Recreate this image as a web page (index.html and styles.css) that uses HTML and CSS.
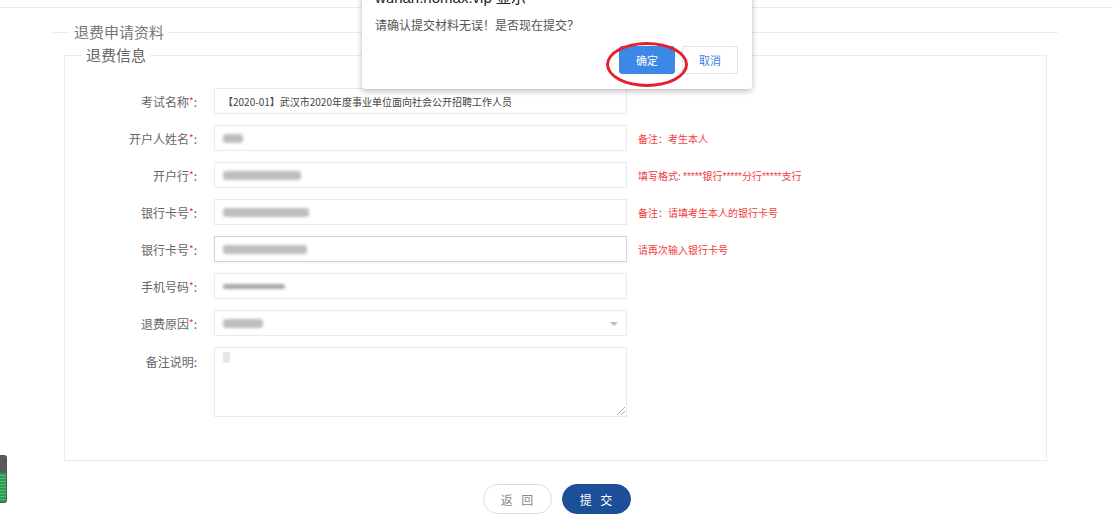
FILE: index.html
```html
<!DOCTYPE html>
<html lang="zh-CN">
  <head>
    <meta charset="UTF-8" />
    <title>退费申请</title>
    <link rel="stylesheet" href="styles.css">
  </head>
  <body>
    <div class="top-bar"></div>

    <fieldset class="outer">
      <legend>退费申请资料</legend>

      <fieldset class="inner">
        <legend>退费信息</legend>

        <div class="row">
          <label>考试名称<i>*</i>:</label>
          <div class="field">【2020-01】武汉市2020年度事业单位面向社会公开招聘工作人员</div>
        </div>
        <div class="row">
          <label>开户人姓名<i>*</i>:</label>
          <div class="field"><span class="blur" style="width: 20px"></span></div>
          <span class="hint">备注：考生本人</span>
        </div>
        <div class="row">
          <label>开户行<i>*</i>:</label>
          <div class="field"><span class="blur" style="width: 78px"></span></div>
          <span class="hint">填写格式: <b>*****</b>银行<b>*****</b>分行<b>*****</b>支行</span>
        </div>
        <div class="row">
          <label>银行卡号<i>*</i>:</label>
          <div class="field"><span class="blur" style="width: 86px"></span></div>
          <span class="hint">备注：请填考生本人的银行卡号</span>
        </div>
        <div class="row">
          <label>银行卡号<i>*</i>:</label>
          <div class="field active"><span class="blur" style="width: 84px"></span></div>
          <span class="hint">请再次输入银行卡号</span>
        </div>
        <div class="row">
          <label>手机号码<i>*</i>:</label>
          <div class="field"><span class="blur thin" style="width: 62px"></span></div>
        </div>
        <div class="row">
          <label>退费原因<i>*</i>:</label>
          <div class="field select"><span class="blur" style="width: 40px"></span><span class="arrow"></span></div>
        </div>
        <div class="row tall">
          <label>备注说明:</label>
          <div class="field area"><span class="blur small"></span><span class="grip"></span></div>
        </div>
      </fieldset>
    </fieldset>

    <div class="actions">
      <button class="btn back">返 回</button>
      <button class="btn submit">提 交</button>
    </div>

    <div class="dialog">
      <div class="dialog-title">wuhan.homax.vip 显示</div>
      <div class="dialog-text">请确认提交材料无误！是否现在提交？</div>
      <div class="dialog-btns">
        <button class="ok">确定</button>
        <button class="cancel">取消</button>
      </div>
    </div>
    <div class="circle-mark"></div>

    <div class="side-widget"></div>
  </body>
</html>
```

FILE: styles.css
```css
* {
  box-sizing: border-box;
}

body {
  margin: 0;
  font-family: "Noto Sans CJK SC", "Noto Sans", sans-serif;
  background: #fff;
  color: #333;
  width: 1113px;
  height: 515px;
  overflow: hidden;
  position: relative;
}

.top-bar {
  height: 8px;
  border-bottom: 1px solid #ececec;
}

fieldset {
  margin: 0;
  min-width: 0;
}

.outer {
  margin: 13px 0 0 53px;
  width: 1005px;
  padding: 0;
  border: none;
  border-top: 1px solid #ececec;
}

.outer > legend {
  margin-left: 17px;
  padding: 0 4px;
  font-size: 15px;
  line-height: 22px;
  color: #777;
}

.inner {
  margin: 1px 11px 0 11px;
  padding: 22px 0 32px 0;
  border: 1px solid #ececec;
}

.inner > legend {
  margin-left: 17px;
  padding: 0 4px;
  font-size: 15px;
  line-height: 22px;
  color: #666;
}

.row {
  display: flex;
  align-items: center;
  height: 26px;
  margin-bottom: 11px;
}

.row.tall {
  height: 70px;
  align-items: flex-start;
}

.row label {
  width: 132px;
  text-align: right;
  font-size: 12px;
  color: #666;
  margin-right: 17px;
}

.row.tall label {
  padding-top: 6px;
}

.row label i {
  color: #e33;
  font-style: normal;
  font-size: 10px;
  vertical-align: 2px;
}

.field {
  width: 413px;
  height: 26px;
  border: 1px solid #ebebeb;
  padding: 0 8px;
  display: flex;
  align-items: center;
  font-size: 10px;
  color: #444;
  position: relative;
}

.field.active {
  border-color: #d4d4d4;
  box-shadow: 0 1px 2px rgba(0, 0, 0, 0.06);
}

.field.area {
  height: 70px;
  align-items: flex-start;
  padding-top: 4px;
}

.blur {
  display: inline-block;
  height: 9px;
  background: #a9a9a9;
  border-radius: 3px;
  filter: blur(1.5px);
  opacity: 0.75;
}

.blur.thin {
  height: 5px;
  background: #888;
}

.blur.small {
  width: 7px;
  height: 11px;
  background: #ddd;
  filter: none;
  border-radius: 2px;
}

.arrow {
  position: absolute;
  right: 8px;
  top: 11px;
  border: 4px solid transparent;
  border-top: 4px solid #bbb;
}

.grip {
  position: absolute;
  right: 1px;
  bottom: 1px;
  width: 8px;
  height: 8px;
  background: linear-gradient(135deg, transparent 45%, #aaa 45%, #aaa 52%, transparent 52%, transparent 70%, #aaa 70%, #aaa 77%, transparent 77%);
}

.hint {
  margin-left: 11px;
  font-size: 10px;
  color: #f03c3c;
}

.hint b {
  font-weight: normal;
  font-family: "Liberation Sans", sans-serif;
  font-size: 10px;
}

.actions {
  display: flex;
  justify-content: center;
  gap: 10px;
  margin-top: 23px;
}

.btn {
  width: 69px;
  height: 30px;
  border-radius: 15px;
  font-family: inherit;
  font-size: 12px;
  letter-spacing: 3px;
  padding-left: 9px;
  cursor: pointer;
}

.back {
  background: #fff;
  border: 1px solid #dcdcdc;
  color: #888;
}

.submit {
  background: #1c4f98;
  border: 1px solid #1c4f98;
  color: #fff;
}

.dialog {
  position: absolute;
  left: 362px;
  top: -20px;
  width: 390px;
  height: 109px;
  background: #fff;
  border-radius: 0 0 3px 3px;
  box-shadow: 0 2px 6px rgba(0, 0, 0, 0.28);
  padding: 0 14px 0 13px;
}

.dialog-title {
  font-family: "Liberation Sans", "Noto Sans CJK SC", sans-serif;
  font-size: 15px;
  line-height: 20px;
  margin-top: 8px;
  color: #222;
}

.dialog-text {
  font-size: 12px;
  color: #555;
  margin-top: 9px;
  line-height: 16px;
}

.dialog-btns {
  display: flex;
  justify-content: flex-end;
  gap: 7px;
  margin-top: 13px;
}

.dialog-btns button {
  width: 56px;
  height: 28px;
  border-radius: 3px;
  font-family: inherit;
  font-size: 11px;
}

.ok {
  background: #3d87e6;
  border: 1px solid #3d87e6;
  color: #fff;
}

.cancel {
  background: #fff;
  border: 1px solid #e2e2e2;
  color: #3d7fe0;
}

.circle-mark {
  position: absolute;
  left: 606px;
  top: 42px;
  width: 82px;
  height: 45px;
  border: 3px solid #e5202e;
  border-radius: 50%;
}

.side-widget {
  position: absolute;
  left: 0;
  top: 455px;
  width: 7px;
  height: 48px;
  border-radius: 0 3px 3px 0;
  border: 1px solid #555;
  border-left: none;
  background:
    repeating-linear-gradient(#2e9a4e 0 2px, #4cc070 2px 3px) 0 17px / 100% 31px no-repeat,
    #5a5a5a;
}
```
